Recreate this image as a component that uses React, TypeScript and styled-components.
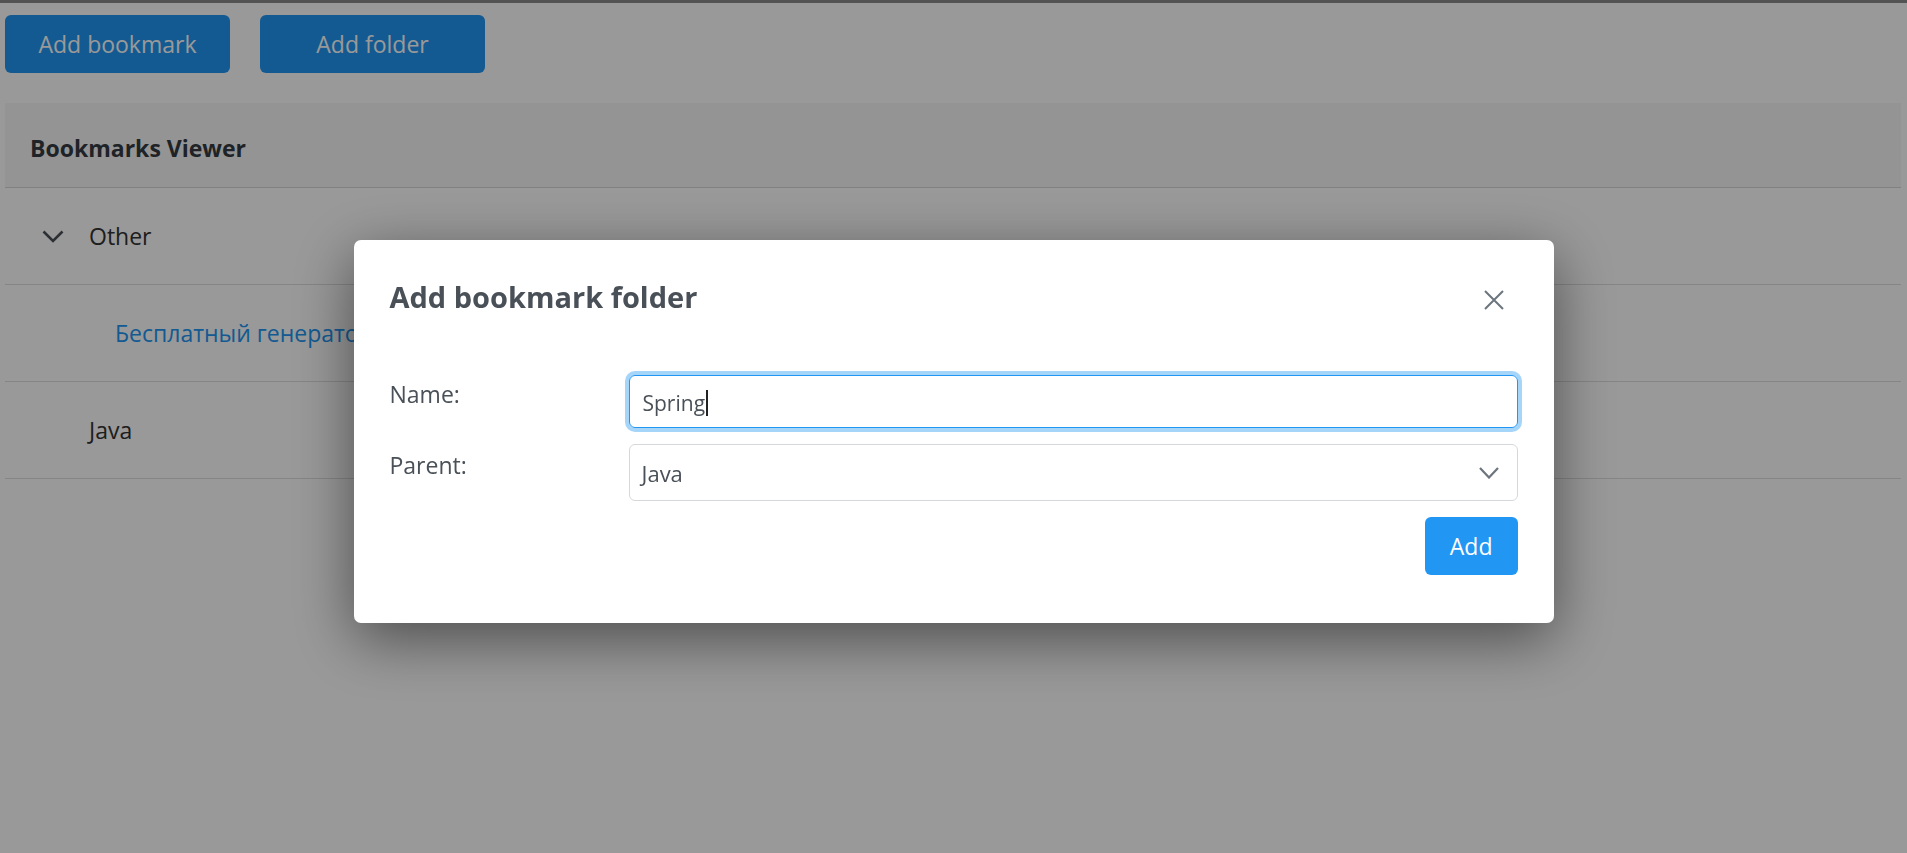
import React from 'react';
import styled, { createGlobalStyle } from 'styled-components';

const GlobalStyle = createGlobalStyle`
  body {
    margin: 0;
    border-top: 3px solid #8a8a8a;
    background: #fff;
    font-family: "Open Sans", "Noto Sans", sans-serif;
    color: #333;
  }
`;

const Page = styled.div`
  padding: 12px 6px 0 5px;
`;

const Toolbar = styled.div`
  display: flex;
  gap: 30px;
  margin-bottom: 30px;
`;

const ToolButton = styled.button`
  width: 225px;
  height: 58px;
  border: none;
  border-radius: 6px;
  background: #2196f3;
  color: #fff;
  font-family: inherit;
  font-size: 23px;
`;

const Card = styled.div`
  display: flex;
  flex-direction: column;
`;

const CardHeader = styled.div`
  height: 85px;
  box-sizing: border-box;
  display: flex;
  align-items: center;
  padding: 6px 25px 0;
  background: rgba(0, 0, 0, 0.03);
  border-bottom: 1px solid rgba(0, 0, 0, 0.13);
  font-size: 23px;
  font-weight: 700;
  color: #343a40;
`;

const TreeRow = styled.div<{ $indent: number }>`
  height: 96px;
  display: flex;
  align-items: center;
  gap: 25px;
  padding-left: ${(p) => p.$indent}px;
  border-bottom: 1px solid rgba(0, 0, 0, 0.13);
  font-size: 23px;
`;

const Toggle = styled.svg`
  width: 22px;
  height: 13px;
  flex: none;
`;

const FolderName = styled.span`
  color: #333;
`;

const BookmarkLink = styled.a`
  color: #2196f3;
  text-decoration: none;
  white-space: nowrap;
`;

const Backdrop = styled.div`
  position: fixed;
  inset: 0;
  background: rgba(0, 0, 0, 0.4);
  display: flex;
  justify-content: center;
  align-items: flex-start;
  padding-top: 240px;
`;

const Dialog = styled.div`
  width: 1200px;
  background: #fff;
  border-radius: 7px;
  box-shadow: 0 16px 60px rgba(0, 0, 0, 0.5);
`;

const DialogHeader = styled.div`
  display: flex;
  align-items: center;
  justify-content: space-between;
  padding: 34px 50px 0 36px;
`;

const DialogTitle = styled.h5`
  margin: 0;
  font-size: 29px;
  line-height: 45px;
  font-weight: 700;
  color: #495057;
`;

const CloseButton = styled.button`
  display: flex;
  padding: 0;
  border: none;
  background: none;
  margin-top: 6px;
`;

const DialogBody = styled.div`
  padding: 56px 36px 48px;
`;

const FormRow = styled.div`
  display: grid;
  grid-template-columns: 239px 1fr;
  align-items: center;
  & + & {
    margin-top: 16px;
  }
`;

const FieldLabel = styled.label`
  font-size: 23px;
  line-height: 36px;
  padding-bottom: 15px;
  color: #495057;
`;

const TextField = styled.div`
  height: 53px;
  box-sizing: border-box;
  display: flex;
  align-items: center;
  padding: 2px 13px 0;
  border: 1.5px solid #2196f3;
  border-radius: 6px;
  box-shadow: 0 0 0 4px #a6d5fa;
  font-size: 21px;
  color: #495057;
`;

const Caret = styled.span`
  width: 1.5px;
  height: 26px;
  margin-left: 1px;
  background: #222;
`;

const SelectField = styled.div`
  height: 57px;
  box-sizing: border-box;
  display: flex;
  align-items: center;
  justify-content: space-between;
  padding: 0 18px 0 12px;
  border: 1.5px solid #d6d9dc;
  border-radius: 6px;
  font-size: 22px;
  color: #495057;
`;

const SelectArrow = styled.svg`
  width: 20px;
  height: 12px;
`;

const Footer = styled.div`
  display: flex;
  justify-content: flex-end;
  margin-top: 16px;
`;

const PrimaryButton = styled.button`
  height: 58px;
  padding: 0 25px;
  border: none;
  border-radius: 6px;
  background: #2196f3;
  color: #fff;
  font-family: inherit;
  font-size: 23px;
`;

const App: React.FC = () => {
  return (
    <>
      <GlobalStyle />
      <Page>
        <Toolbar>
          <ToolButton>Add bookmark</ToolButton>
          <ToolButton>Add folder</ToolButton>
        </Toolbar>

        <Card>
          <CardHeader>Bookmarks Viewer</CardHeader>
          <TreeRow $indent={37}>
            <Toggle viewBox="0 0 22 13">
              <polyline points="1.5,1.5 11,11 20.5,1.5" fill="none" stroke="#4a5057" strokeWidth="2.6" />
            </Toggle>
            <FolderName>Other</FolderName>
          </TreeRow>
          <TreeRow $indent={110}>
            <BookmarkLink href="#">Бесплатный генератор паролей онлайн</BookmarkLink>
          </TreeRow>
          <TreeRow $indent={84}>
            <FolderName>Java</FolderName>
          </TreeRow>
        </Card>
      </Page>

      <Backdrop>
        <Dialog>
          <DialogHeader>
            <DialogTitle>Add bookmark folder</DialogTitle>
            <CloseButton aria-label="Close">
              <svg width="20" height="20" viewBox="0 0 20 20">
                <path d="M1 1 19 19M19 1 1 19" stroke="#6c757d" strokeWidth="2" fill="none" />
              </svg>
            </CloseButton>
          </DialogHeader>

          <DialogBody>
            <FormRow>
              <FieldLabel>Name:</FieldLabel>
              <TextField>
                Spring
                <Caret />
              </TextField>
            </FormRow>
            <FormRow>
              <FieldLabel>Parent:</FieldLabel>
              <SelectField>
                Java
                <SelectArrow viewBox="0 0 20 12">
                  <polyline points="1,1 10,10.5 19,1" fill="none" stroke="#6c757d" strokeWidth="2.2" />
                </SelectArrow>
              </SelectField>
            </FormRow>
            <Footer>
              <PrimaryButton>Add</PrimaryButton>
            </Footer>
          </DialogBody>
        </Dialog>
      </Backdrop>
    </>
  );
};

export default App;
